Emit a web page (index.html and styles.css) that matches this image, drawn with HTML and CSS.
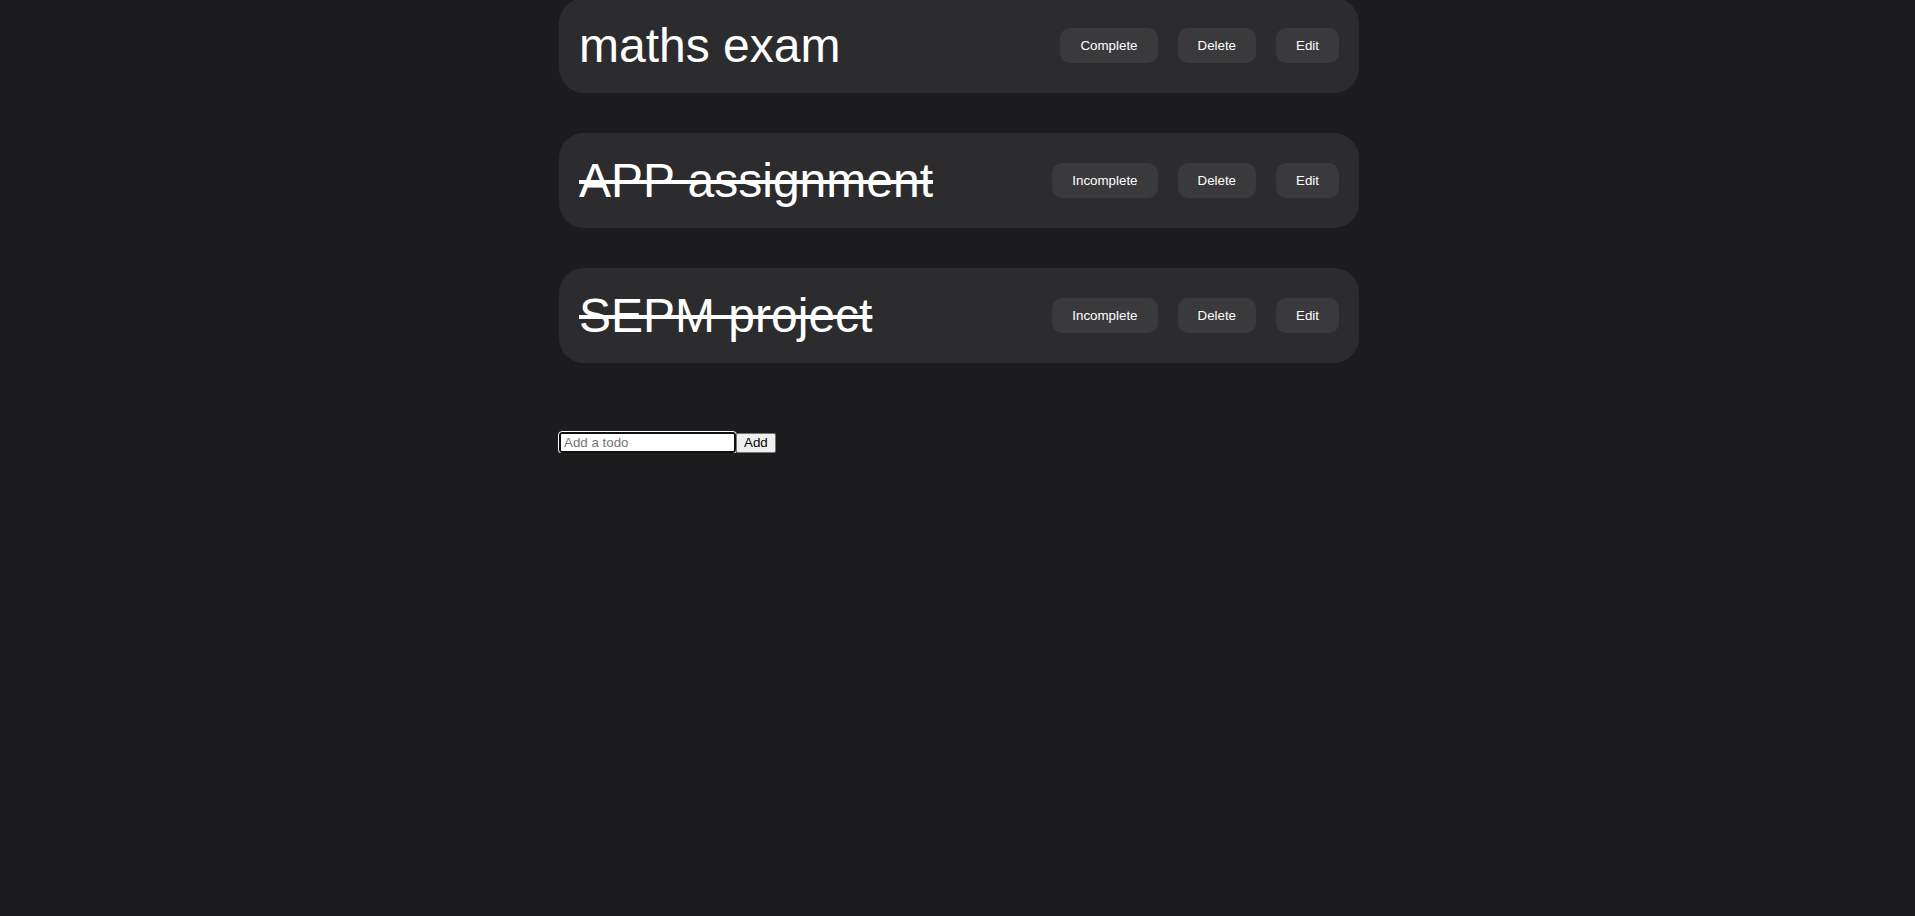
FILE: index.html
```html
<!DOCTYPE html>
<html lang="en">
<head>
<meta charset="utf-8">
<title>Todos</title>
<link rel="stylesheet" href="styles.css">
</head>
<body>
<main class="app">
  <ul class="todo-list">
    <li class="todo">
      <span class="todo-text">maths exam</span>
      <div class="actions">
        <button class="btn">Complete</button>
        <button class="btn">Delete</button>
        <button class="btn">Edit</button>
      </div>
    </li>
    <li class="todo done">
      <span class="todo-text">APP assignment</span>
      <div class="actions">
        <button class="btn">Incomplete</button>
        <button class="btn">Delete</button>
        <button class="btn">Edit</button>
      </div>
    </li>
    <li class="todo done">
      <span class="todo-text">SEPM project</span>
      <div class="actions">
        <button class="btn">Incomplete</button>
        <button class="btn">Delete</button>
        <button class="btn">Edit</button>
      </div>
    </li>
  </ul>
  <form class="add-form">
    <input class="add-input" type="text" placeholder="Add a todo">
    <button class="add-btn" type="button">Add</button>
  </form>
</main>
</body>
</html>
```
FILE: styles.css
```css
html, body {
  margin: 0;
  padding: 0;
  background: #1c1c1e;
  font-family: "Liberation Sans", Arial, sans-serif;
  color: #fff;
}

.app {
  width: 800px;
  margin: 0 auto;
  padding-left: 3px;
}

.todo-list {
  list-style: none;
  margin: -2px 0 0 0;
  padding: 0;
  display: flex;
  flex-direction: column;
  gap: 40px;
}

.todo {
  display: flex;
  align-items: center;
  justify-content: space-between;
  background: #2c2c2e;
  border-radius: 25px;
  padding: 20px;
}

.todo-text {
  font-size: 48px;
  line-height: normal;
  color: #fff;
}

.done .todo-text {
  text-decoration: line-through;
}

.actions {
  display: flex;
  gap: 20px;
}

.btn {
  font-family: "Liberation Sans", Arial, sans-serif;
  font-size: 13.33px;
  font-weight: 400;
  color: #fff;
  background: #3a3a3c;
  border: none;
  border-radius: 10px;
  padding: 10px 20px;
  line-height: 15px;
}

.add-form {
  display: flex;
  align-items: center;
  margin-top: 69px;
}

.add-input {
  box-sizing: border-box;
  width: 177px;
  height: 21px;
  margin: 0;
  padding: 1px 3px;
  border: 2px solid #101010;
  border-radius: 3px;
  outline: 1px solid #ffffff;
  background: #fff;
  font-family: "Liberation Sans", Arial, sans-serif;
  font-size: 13.33px;
  color: #000;
}

.add-input::placeholder {
  color: #757575;
}

.add-btn {
  box-sizing: border-box;
  height: 20px;
  margin: 0;
  padding: 1px 7px;
  border: 1px solid #767676;
  border-radius: 2px;
  background: #efefef;
  color: #000;
  font-family: "Liberation Sans", Arial, sans-serif;
  font-size: 13.33px;
  font-weight: 400;
  line-height: 15px;
}
```
